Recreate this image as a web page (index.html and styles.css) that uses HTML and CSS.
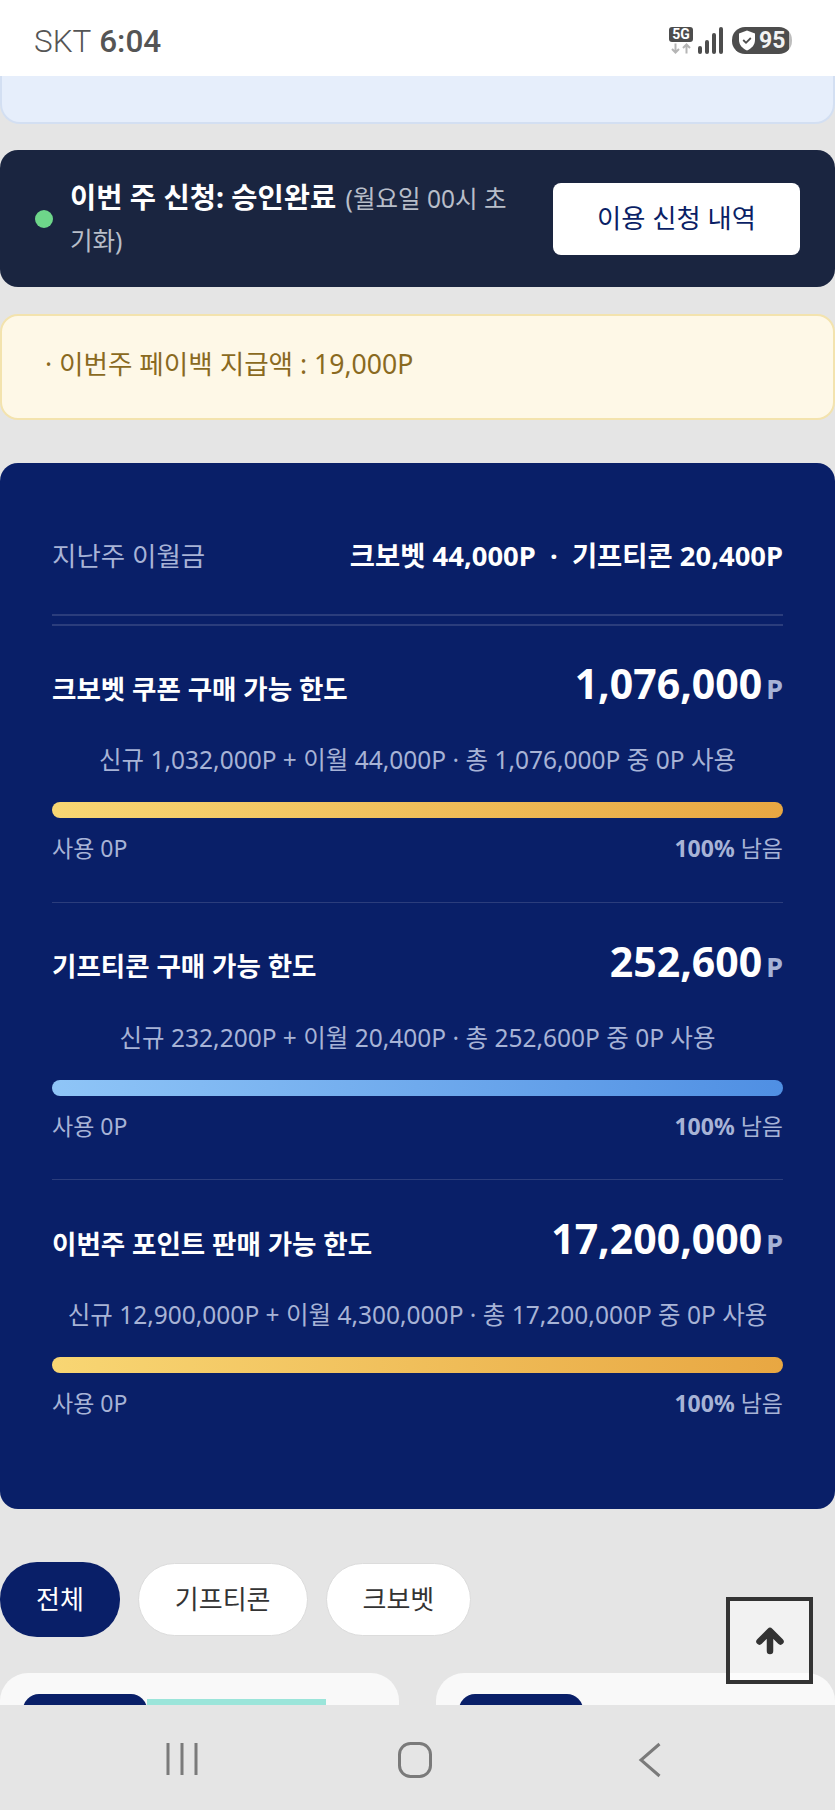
FILE: index.html
```html
<!DOCTYPE html>
<html lang="ko">
<head>
<meta charset="utf-8">
<title>이용 한도</title>
<link rel="stylesheet" href="styles.css">
</head>
<body>
<div class="screen">
  <header class="status">
    <div class="status-left"><span class="carrier">SKT</span> <span class="clock">6:04</span></div>
    <div class="status-right">
      <div class="net">
        <span class="net-badge">5G</span>
        <svg class="net-arrows" width="22" height="11" viewBox="0 0 22 11"><path d="M5.500 0.500V9M2 6l3.500 3.500L9 6" fill="none" stroke="#b5b5b5" stroke-width="2"/><path d="M16.500 10.500V2M13 5l3.500-3.500L20 5" fill="none" stroke="#b5b5b5" stroke-width="2"/></svg>
      </div>
      <svg class="signal" width="26" height="27" viewBox="0 0 26 27"><g fill="#4d4d4d"><rect x="0" y="19" width="4" height="8" rx="2"/><rect x="7" y="13" width="4" height="14" rx="2"/><rect x="14" y="6" width="4" height="21" rx="2"/><rect x="21" y="0" width="4" height="27" rx="2"/></g></svg>
      <div class="battery">
        <svg width="18" height="21" viewBox="0 0 18 21"><path d="M9 0.500L17 3.500V10c0 5-3.500 8.500-8 10.500C4.500 18.500 1 15 1 10V3.500z" fill="#fff"/><path d="M5.200 10l2.800 2.800 4.800-4.800" fill="none" stroke="#4d4d4d" stroke-width="1.800"/></svg>
        <span class="battery-num">95</span>
      </div>
    </div>
  </header>

  <main class="content">
    <div class="notice-blue"></div>

    <section class="apply">
      <span class="dot"></span>
      <p class="apply-text"><strong>이번 주 신청: 승인완료</strong> <span class="apply-note">(월요일 00시 초기화)</span></p>
      <button class="apply-btn"><span class="apply-btn-label">이용 신청 내역</span></button>
    </section>

    <section class="payback"><span class="payback-text">· 이번주 페이백 지급액 : 19,000P</span></section>

    <section class="panel">
      <div class="carry">
        <span class="carry-label">지난주 이월금</span>
        <span class="carry-value">크보벳 44,000P &nbsp;·&nbsp; 기프티콘 20,400P</span>
      </div>

      <article class="limit">
        <div class="limit-head">
          <h3 class="limit-title">크보벳 쿠폰 구매 가능 한도</h3>
          <div class="limit-amount">1,076,000<span class="limit-unit">P</span></div>
        </div>
        <p class="limit-sub">신규 1,032,000P + 이월 44,000P · 총 1,076,000P 중 0P 사용</p>
        <div class="bar bar-gold"></div>
        <div class="limit-foot"><span>사용 0P</span><span><b>100%</b> 남음</span></div>
      </article>

      <article class="limit">
        <div class="limit-head">
          <h3 class="limit-title">기프티콘 구매 가능 한도</h3>
          <div class="limit-amount">252,600<span class="limit-unit">P</span></div>
        </div>
        <p class="limit-sub">신규 232,200P + 이월 20,400P · 총 252,600P 중 0P 사용</p>
        <div class="bar bar-blue"></div>
        <div class="limit-foot"><span>사용 0P</span><span><b>100%</b> 남음</span></div>
      </article>

      <article class="limit">
        <div class="limit-head">
          <h3 class="limit-title">이번주 포인트 판매 가능 한도</h3>
          <div class="limit-amount">17,200,000<span class="limit-unit">P</span></div>
        </div>
        <p class="limit-sub">신규 12,900,000P + 이월 4,300,000P · 총 17,200,000P 중 0P 사용</p>
        <div class="bar bar-gold"></div>
        <div class="limit-foot"><span>사용 0P</span><span><b>100%</b> 남음</span></div>
      </article>
    </section>

    <nav class="tabs">
      <button class="tab tab-active"><span class="tab-label">전체</span></button>
      <button class="tab"><span class="tab-label">기프티콘</span></button>
      <button class="tab"><span class="tab-label">크보벳</span></button>
    </nav>

    <div class="cards">
      <div class="card"><div class="card-top"><span class="card-label"></span><span class="card-band"></span></div></div>
      <div class="card"><div class="card-top"><span class="card-label"></span></div></div>
    </div>
  </main>

  <button class="to-top" aria-label="맨 위로">
    <svg width="28" height="28" viewBox="0 0 28 28"><path d="M14 24V5M3.500 14.500L14 4l10.500 10.500" fill="none" stroke="#333" stroke-width="6.500" stroke-linecap="round" stroke-linejoin="round"/></svg>
  </button>

  <footer class="navbar">
    <svg width="34" height="34" viewBox="0 0 34 34"><path d="M3 1V33M17 1V33M31 1V33" fill="none" stroke="#7a7a7a" stroke-width="3"/></svg>
    <svg width="34" height="36" viewBox="0 0 34 36"><rect x="1.500" y="1.500" width="31" height="33" rx="11" fill="none" stroke="#7a7a7a" stroke-width="3"/></svg>
    <svg class="nav-back" width="24" height="36" viewBox="0 0 24 36"><path d="M21.500 2L3 18l18.500 16" fill="none" stroke="#7a7a7a" stroke-width="3"/></svg>
  </footer>
</div>
</body>
</html>
```
FILE: styles.css
```css
* { box-sizing: border-box; }
html, body { margin: 0; padding: 0; }
body { font-family: "Noto Sans", "Noto Sans CJK KR", sans-serif; background: #e5e5e5; }
button { font-family: inherit; }
h3, p { margin: 0; }

.screen { position: relative; width: 835px; height: 1810px; overflow: hidden; display: flex; flex-direction: column; background: #e5e5e5; }

.status { flex: none; height: 76px; background: #fff; display: flex; justify-content: space-between; align-items: center; padding: 6px 43px 0 34px; }
.status-left { font-family: Roboto, sans-serif; font-size: 31.500px; color: #555; }
.carrier { font-weight: 300; }
.clock { font-weight: 500; }
.status-right { display: flex; align-items: center; gap: 5px; margin-top: -1px; }
.net { display: flex; flex-direction: column; align-items: center; width: 24px; gap: 1px; }
.net-badge { width: 24px; height: 15px; background: #4d4d4d; border-radius: 3px; color: #fff; font: 700 14px/15px Roboto, sans-serif; text-align: center; }
.net-arrows { display: block; }
.signal { display: block; margin-right: 3px; }
.battery { width: 60px; height: 27px; background: linear-gradient(90deg, #4d4d4d 95%, #bdbdbd 95%); border-radius: 13px; display: flex; align-items: center; gap: 3px; padding-left: 6px; }
.battery-num { color: #f2f2f2; font: 700 23px/27px Roboto, sans-serif; }

.content { flex: 1; min-height: 0; overflow: hidden; }

.notice-blue { height: 48px; background: #e6eefb; border: 2px solid #d3dff2; border-top: 0; border-radius: 0 0 20px 20px; }

.apply { margin-top: 26px; height: 137px; background: #1a2540; border-radius: 18px; display: flex; align-items: center; padding: 0 35px; }
.dot { flex: none; width: 18px; height: 18px; border-radius: 50%; background: #6ed68a; margin-right: 17px; }
.apply-text { flex: 1; color: #b8bec9; font-size: 24.500px; line-height: 42px; }
.apply-text strong { color: #fff; font-size: 28.500px; font-weight: 700; margin-right: 3px; }
.apply-btn { flex: none; margin-left: 32px; width: 247px; height: 72px; border: 0; border-radius: 8px; background: #fff; color: #0a1f66; font-size: 26.300px; font-weight: 400; padding: 0 0 4px; }

.payback { margin-top: 27px; height: 106px; background: #fef8e7; border: 2px solid #f3e3ae; border-radius: 18px; padding: 0 0 10px 43px; display: flex; align-items: center; color: #8a6a1f; font-size: 26.600px; }

.panel { margin-top: 43px; background: #091f68; border-radius: 18px; padding: 60px 52px 0; height: 1046px; color: #fff; }
.carry { display: flex; justify-content: space-between; align-items: center; height: 93px; padding-bottom: 29px; margin-bottom: 8px; border-bottom: 2px solid #2b3d7c; }
.carry-label { color: #a7b3d6; font-size: 26.500px; }
.carry-value { font-size: 27.400px; font-weight: 700; }

.limit { border-top: 1px solid #2b3d7c; padding-top: 30px; height: 277.500px; }
.limit:nth-of-type(1) { border-top-width: 2px; padding-top: 29px; }
.limit-head { display: flex; justify-content: space-between; align-items: center; height: 64px; }
.limit-title { font-size: 26.500px; font-weight: 700; }
.limit-amount { font-size: 41px; font-weight: 700; line-height: 64px; padding-bottom: 2px; }
.limit-unit { font-size: 27px; color: #a7b3d6; margin-left: 4px; }
.limit-sub { margin-top: 23px; text-align: center; color: #a7b3d6; font-size: 24.500px; line-height: 36px; }
.bar { margin-top: 24px; height: 16px; border-radius: 8px; }
.bar-gold { background: linear-gradient(90deg, #f8d673, #e8a742); }
.bar-blue { background: linear-gradient(90deg, #8fc5f7, #4f8fe3); }
.limit-foot { margin-top: 13px; display: flex; justify-content: space-between; color: #a7b3d6; font-size: 23px; line-height: 34px; }

.tabs { margin-top: 53px; display: flex; align-items: center; gap: 18px; }
.tab { height: 73px; padding: 0 36px 4px; border: 1px solid #dcdcdc; border-radius: 37px; background: #fff; color: #333; font-size: 26px; }
.tab-active { height: 75px; padding: 0 36px 4px; border: 0; background: #091f68; color: #fff; }

.cards { margin-top: 36px; display: grid; grid-template-columns: 399px 399px; gap: 37px; }
.card { height: 120px; background: #f9f9f9; border-radius: 28px 28px 0 0; padding: 21px 23px 0; }
.card-top { display: flex; align-items: flex-end; }
.card-label { width: 124px; height: 60px; background: #091f68; border-radius: 16px 16px 0 0; }
.card-band { width: 179px; height: 55px; background: #9be5da; }

.to-top { position: absolute; left: 726px; top: 1597px; width: 87px; height: 87px; padding: 0; background: rgba(255,255,255,.5); border: 4px solid #333; display: flex; align-items: center; justify-content: center; }

.navbar { flex: none; height: 105px; background: #e5e5e5; display: flex; align-items: flex-start; gap: 199px; padding: 37px 0 0 165px; }
.nav-back { margin-left: 7px; }
```
